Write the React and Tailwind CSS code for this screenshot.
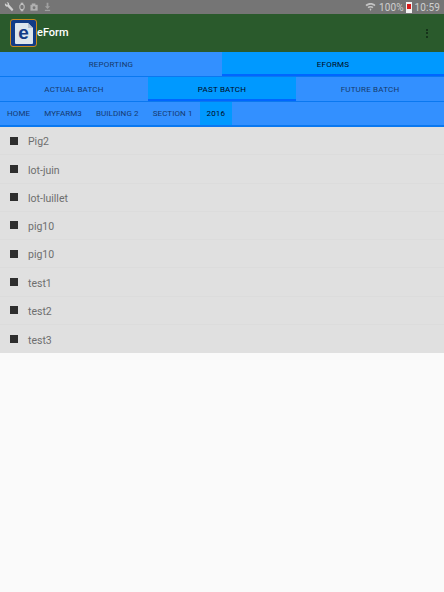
const font = { fontFamily: 'Roboto, sans-serif' };

function StatusIcons() {
  return (
    <div className="flex items-center gap-[5px] pl-[4px]">
      <svg width="10" height="10" viewBox="0 0 10 10" className="shrink-0">
        <path d="M1 1.2 L3.4 3.2 L3.6 1.2 L2.6 .4 C4 -.2 5.4 1 5 2.6 L9.4 7.6 L8 9.2 L3.4 4.6 C2 5 .4 3.4 1 1.2Z" fill="#d0d0d0" />
      </svg>
      <svg width="6" height="10" viewBox="0 0 7 10"><rect x="1" y="2" width="5" height="6" rx="2" fill="none" stroke="#c4c4c4" strokeWidth="1.2" /><rect x="2" y="0" width="3" height="1.4" fill="#c4c4c4" /><rect x="2" y="8.6" width="3" height="1.4" fill="#c4c4c4" /></svg>
      <svg width="9" height="9" viewBox="0 0 10 9"><rect x=".5" y="1.5" width="8" height="6.5" fill="#b0b0b0" /><rect x="2" y="0" width="4" height="2" fill="#b0b0b0" /><circle cx="4.5" cy="4.8" r="1.6" fill="#777" /></svg>
      <svg width="7" height="10" viewBox="0 0 8 10"><path d="M3 0h2v4h2L4 7.4 1 4h2z" fill="#a0a0a0" /><rect x="1" y="8.2" width="6" height="1.4" fill="#a0a0a0" /></svg>
    </div>
  );
}

function Logo() {
  return (
    <div className="relative w-[27px] h-[28px] rounded-[3px] border border-[#c98a1e] bg-[#123b86] flex items-center justify-center ml-[10px] shrink-0">
      <div className="relative w-[18px] h-[21px] bg-[#dde5ec] rounded-[1px] flex items-center justify-center">
        <svg width="5" height="5" viewBox="0 0 5 5" className="absolute right-0 top-0"><path d="M0 0H5V5Z" fill="#123b86" /><path d="M0 0L5 5H0Z" fill="#b7c3d2" /></svg>
        <span className="text-[19px] leading-none font-bold text-[#123b86] -mt-[2px]" style={{ fontFamily: '"Liberation Sans", sans-serif' }}>e</span>
      </div>
    </div>
  );
}

function Tab({ label, active }) {
  return (
    <div className={`flex-1 flex items-center justify-center h-full pt-[3px] text-[8px] tracking-[0.2px] border-b-2 ${active ? 'bg-[#0099ff] text-[#000a1a] border-[#0066ff]' : 'bg-[#3390ff] text-[#173a6c] border-transparent'}`}>
      {label}
    </div>
  );
}

function Crumb({ label, active }) {
  return (
    <div className={`h-full flex items-center px-[7px] pt-[1px] text-[8px] tracking-[0.1px] ${active ? 'bg-[#0099ff] text-[#000a1a]' : 'text-[#153a70]'}`}>
      {label}
    </div>
  );
}

const rows = ['Pig2', 'lot-juin', 'lot-luillet', 'pig10', 'pig10', 'test1', 'test2', 'test3'];

export default function App() {
  return (
    <div className="w-[444px] h-[592px] bg-[#fafafa] overflow-hidden flex flex-col" style={font}>
      <div className="h-[14px] bg-[#757575] flex items-center justify-between shrink-0">
        <StatusIcons />
        <div className="flex items-center pr-[4px] text-[#cfcfcf] text-[10px] tracking-[0.1px]">
          <svg width="11" height="10" viewBox="0 0 11 10" className="mr-[3px]"><path d="M.5 3 C3.5 .4 7.5 .4 10.5 3 L9.4 4.2 C7 2.2 4 2.2 1.6 4.2Z M2.5 5 C4.2 3.6 6.8 3.6 8.5 5 L7.4 6.2 C6.2 5.2 4.8 5.2 3.6 6.2Z M4.5 7 L5.5 6.4 L6.5 7 L5.5 9Z" fill="#c4c4c4" /></svg>
          <span>100%</span>
          <span className="relative w-[6px] h-[11px] bg-[#f2f2f2] ml-[2px] mr-[3px]"><span className="absolute left-[1px] top-[2px] w-[4px] h-[5px] bg-[#d81b1b]" /></span>
          <span>10:59</span>
        </div>
      </div>
      <div className="h-[38px] bg-[#2a5a2c] flex items-center shrink-0">
        <Logo />
        <span className="text-white text-[11px] font-medium mt-px">eForm</span>
        <div className="ml-auto mr-[16px] flex flex-col gap-[1.5px]">
          <span className="w-[2px] h-[2px] bg-[#16331a]" />
          <span className="w-[2px] h-[2px] bg-[#16331a]" />
          <span className="w-[2px] h-[2px] bg-[#16331a]" />
        </div>
      </div>
      <div className="h-[25px] flex shrink-0 border-b border-[#0a78f0]">
        <Tab label="REPORTING" />
        <Tab label="EFORMS" active />
      </div>
      <div className="h-[25px] flex shrink-0 border-b border-[#0a78f0]">
        <Tab label="ACTUAL BATCH" />
        <Tab label="PAST BATCH" active />
        <Tab label="FUTURE BATCH" />
      </div>
      <div className="h-[25px] flex bg-[#3390ff] shrink-0 border-b-2 border-[#0a78f0]">
        <Crumb label="HOME" />
        <Crumb label="MYFARM3" />
        <Crumb label="BUILDING 2" />
        <Crumb label="SECTION 1" />
        <Crumb label="2016" active />
      </div>
      <div className="bg-[#e0e0e0] flex flex-col">
        {rows.map((r, i) => (
          <div key={i} className="h-[28.25px] flex items-center border-b border-[#dcdcdc] last:border-b-0 pl-[10px]">
            <span className="w-[8px] h-[8px] bg-[#2e2e2e]" />
            <span className="ml-[10px] mt-[3px] text-[10.5px] text-[#6e6e6e]">{r}</span>
          </div>
        ))}
      </div>
    </div>
  );
}
